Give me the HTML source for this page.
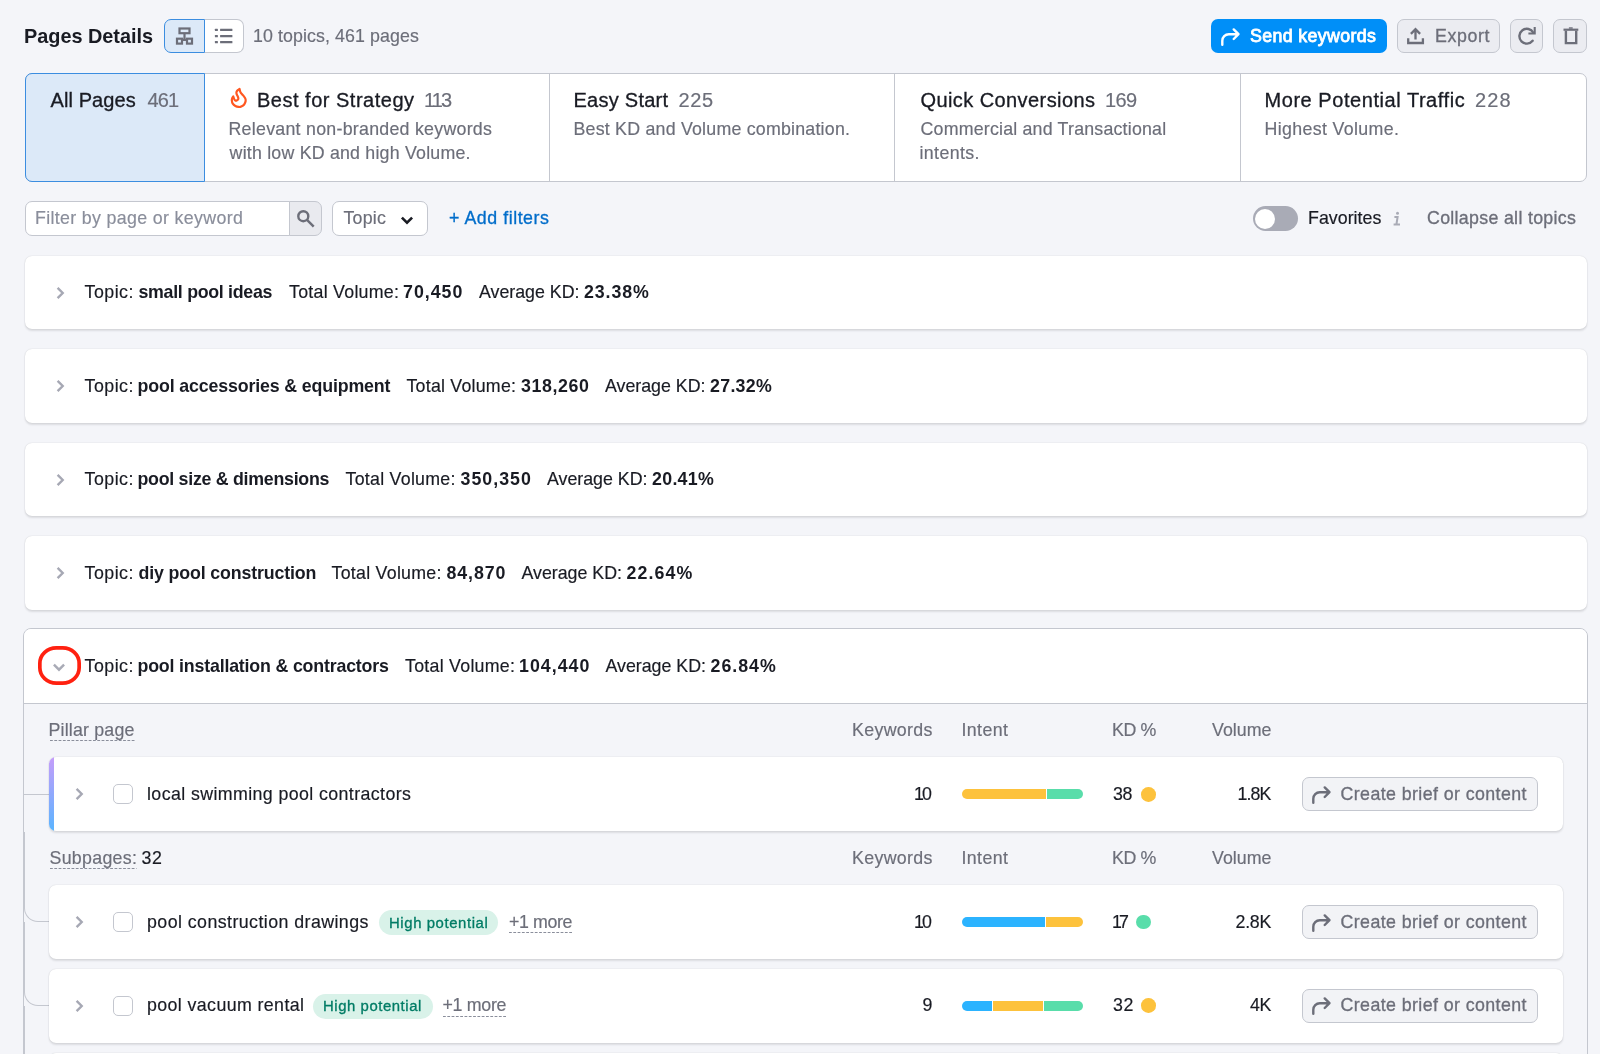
<!DOCTYPE html>
<html lang="en">
<head>
<meta charset="utf-8">
<title>Pages Details</title>
<style>
html,body{margin:0;padding:0}
body{width:1600px;height:1054px;overflow:hidden;position:relative;background:#f4f5f9;font-family:"Liberation Sans",sans-serif;color:#191b23}
.a{position:absolute;box-sizing:border-box}
.t{position:absolute;white-space:pre;line-height:1;font-kerning:normal;-webkit-text-stroke:.18px currentColor}
.b{font-weight:700;-webkit-text-stroke:0}
.m{-webkit-text-stroke:.32px currentColor}
.s{color:#6c6e79}
svg{position:absolute;overflow:visible}
.card{background:#fff;border-radius:7px;box-shadow:0 0 1.2px 0 rgba(25,27,35,.17),0 1.2px 2px 0 rgba(25,27,35,.11)}
.row{background:#fff;border-radius:7px;box-shadow:0 0 1.2px 0 rgba(25,27,35,.17),0 1.2px 2px 0 rgba(25,27,35,.11)}
.btn2{background:#ebecf1;border:1px solid #c4c7cf;border-radius:7px}
.cb{background:#fff;border:1px solid #c4c7cf;border-radius:5px;width:20px;height:20px}
.bar{height:10px;border-radius:5px;overflow:hidden;display:flex;background:#fff}
.bar i{display:block;height:10px}
.bar i+i{margin-left:1px}
.dot{border-radius:50%}
.badge{background:#d9f2e9;border-radius:13px;height:25px}
.dash{border-bottom:1px dashed #8a8e9b;height:0}
.txt{position:absolute;left:0;top:0;width:1600px;height:1054px;will-change:transform}

</style>
</head>
<body>
<!-- header: view toggle -->
<div class="a" style="left:164px;top:19px;width:41px;height:34px;background:#dce9f8;border:1px solid #3b8de0;border-radius:7px 0 0 7px"></div>
<div class="a" style="left:205px;top:19px;width:39px;height:34px;background:#fff;border:1px solid #c4c7cf;border-left:0;border-radius:0 7px 7px 0"></div>
<svg style="left:175px;top:26px" width="19" height="20" viewBox="0 0 19 20" fill="none" stroke="#6c6e79" stroke-width="2.200"><rect x="4.500" y="2.500" width="10" height="4.700"/><rect x="2" y="12.700" width="5" height="4.900"/><rect x="12" y="12.700" width="5" height="4.900"/><path d="M9.500 7.200v5.500M7 13.800h5"/></svg>
<svg style="left:214px;top:26px" width="20" height="20" viewBox="0 0 20 20" fill="#6c6e79"><rect x=".900" y="2.800" width="3" height="2.300" rx=".500"/><rect x="6.100" y="2.800" width="12.300" height="2.300" rx=".300"/><rect x=".900" y="8.900" width="3" height="2.300" rx=".500"/><rect x="6.100" y="8.900" width="12.300" height="2.300" rx=".300"/><rect x=".900" y="15" width="3" height="2.300" rx=".500"/><rect x="6.100" y="15" width="12.300" height="2.300" rx=".300"/></svg>
<!-- header: buttons -->
<div class="a" style="left:1210.75px;top:19px;width:176px;height:34px;background:#008ff8;border-radius:7px"></div>
<svg style="left:1220.2px;top:26.5px" width="22" height="20" viewBox="0 0 22 20" fill="none" stroke="#fff" stroke-width="2.4" stroke-linecap="round" stroke-linejoin="round"><path d="M2.300 17.700v-4a6.500 6.500 0 0 1 6.500-6.500h9.400M13.700 2.400l4.800 4.800-4.800 4.800"/></svg>
<div class="a btn2" style="left:1396.75px;top:19px;width:103.25px;height:34px;"></div>
<svg style="left:1406px;top:26px" width="19" height="20" viewBox="0 0 19 20" fill="none" stroke="#6c6e79" stroke-width="2.300"><path d="M2.200 12.300v4.700h14.700v-4.700M9.500 13.500V3.200M4.900 7.900l4.600-4.700 4.600 4.700"/></svg>
<div class="a btn2" style="left:1510px;top:19px;width:33.25px;height:34px;"></div>
<svg style="left:1517px;top:26px" width="20" height="20" viewBox="0 0 20 20" fill="none" stroke="#6c6e79" stroke-width="2.400"><path d="M16.330 6.730A7.400 7.400 0 1 0 15.630 14.760" stroke-linecap="round"/><path d="M17.700 1v6.500h-6.300" stroke-width="2.100"/></svg>
<div class="a btn2" style="left:1553.25px;top:19px;width:33.75px;height:34px;"></div>
<svg style="left:1560.5px;top:26px" width="20" height="20" viewBox="0 0 20 20" fill="none" stroke="#6c6e79" stroke-width="2.400"><path d="M4.900 4.800v12.300h10.300V4.800"/><path d="M2.500 3.700h14.800" stroke-width="2.200"/><path d="M7.900 2h3.800" stroke-width="1.400"/></svg>
<!-- tabs -->
<div class="a" style="left:24.5px;top:73px;width:1562.5px;height:108.5px;background:#fff;border:1px solid #c4c7cf;border-radius:7px"></div>
<div class="a" style="left:549px;top:74px;width:1px;height:106.5px;background:#c4c7cf"></div>
<div class="a" style="left:894px;top:74px;width:1px;height:106.5px;background:#c4c7cf"></div>
<div class="a" style="left:1240px;top:74px;width:1px;height:106.5px;background:#c4c7cf"></div>
<div class="a" style="left:24.5px;top:73px;width:180px;height:108.5px;background:#dce9f8;border:1px solid #3b8de0;border-radius:7px 0 0 7px"></div>
<svg style="left:229px;top:87px" width="20" height="22" viewBox="0 0 20 22" fill="none" stroke="#ff5720" stroke-width="2.200" stroke-linejoin="round"><path d="M10.54 1.91C10.69 2.47 10.87 4.15 11.47 5.23C12.07 6.32 13.33 7.40 14.12 8.42C14.92 9.44 15.83 10.41 16.25 11.34C16.67 12.27 16.82 12.98 16.65 14.00C16.47 15.02 15.92 16.52 15.19 17.45C14.46 18.38 13.19 19.16 12.26 19.58C11.33 20.00 10.58 20.06 9.61 19.97C8.63 19.89 7.39 19.60 6.42 19.05C5.45 18.49 4.36 17.58 3.76 16.65C3.17 15.73 2.92 14.40 2.84 13.47C2.75 12.54 2.99 11.74 3.23 11.08C3.48 10.41 4.12 9.75 4.30 9.48C4.43 9.88 4.78 11.23 5.09 11.87C5.40 12.52 5.76 13.05 6.16 13.33C6.55 13.62 7.02 13.71 7.48 13.60C7.95 13.49 8.63 13.09 8.94 12.67C9.25 12.25 9.41 11.70 9.34 11.08C9.28 10.46 8.83 9.62 8.55 8.95C8.26 8.29 7.79 7.76 7.62 7.09C7.44 6.43 7.28 5.63 7.48 4.97C7.68 4.30 8.30 3.62 8.81 3.11C9.32 2.60 10.25 2.11 10.54 1.91z"/></svg>
<!-- filter row -->
<div class="a" style="left:24.5px;top:201px;width:265.5px;height:35px;background:#fff;border:1px solid #c4c7cf;border-radius:7px 0 0 7px"></div>
<div class="a" style="left:289px;top:201px;width:33px;height:35px;background:#e9eaef;border:1px solid #c4c7cf;border-radius:0 7px 7px 0"></div>
<svg style="left:296px;top:209px" width="20" height="20" viewBox="0 0 20 20" fill="none" stroke="#6c6e79" stroke-width="2.400"><circle cx="7.300" cy="7.200" r="5"/><path d="M11 10.900l6.700 6.700"/></svg>
<div class="a" style="left:332px;top:201px;width:95.5px;height:35px;background:#fff;border:1px solid #c4c7cf;border-radius:7px"></div>
<svg style="left:400.4px;top:215.8px" width="14" height="9" viewBox="0 0 14 9" fill="none" stroke="#191b23" stroke-width="2.6" stroke-linejoin="miter"><path d="M1.900 1.600l5.100 5.100 5.100-5.100"/></svg>
<div class="a" style="left:1253px;top:206.25px;width:44.5px;height:24.5px;background:#a9abb6;border-radius:13px"></div>
<div class="a" style="left:1255.3px;top:208.8px;width:20px;height:20px;background:#fff;border-radius:50%"></div>
<svg style="left:1392px;top:210px" width="10" height="17" viewBox="0 0 10 17" fill="none" stroke="#a9abb6" stroke-width="2"><circle cx="5.500" cy="3.200" r="1.500" fill="#a9abb6" stroke="none"/><path d="M2.400 6.900h3.200l-1.200 7.600M1.600 14.600h6.400"/></svg>
<!-- topic cards -->
<div class="a card" style="left:25px;top:255.75px;width:1562px;height:73.25px;"></div>
<svg style="left:56px;top:285.75px" width="9" height="14" viewBox="0 0 9 14" fill="none" stroke="#a6a8b4" stroke-width="2.400" stroke-linejoin="miter"><path d="M1.600 1.900l5.100 5.100-5.100 5.100"/></svg>
<div class="a card" style="left:25px;top:349.25px;width:1562px;height:73.25px;"></div>
<svg style="left:56px;top:379.25px" width="9" height="14" viewBox="0 0 9 14" fill="none" stroke="#a6a8b4" stroke-width="2.400" stroke-linejoin="miter"><path d="M1.600 1.900l5.100 5.100-5.100 5.100"/></svg>
<div class="a card" style="left:25px;top:442.75px;width:1562px;height:73.25px;"></div>
<svg style="left:56px;top:472.75px" width="9" height="14" viewBox="0 0 9 14" fill="none" stroke="#a6a8b4" stroke-width="2.400" stroke-linejoin="miter"><path d="M1.600 1.900l5.100 5.100-5.100 5.100"/></svg>
<div class="a card" style="left:25px;top:536.25px;width:1562px;height:73.25px;"></div>
<svg style="left:56px;top:566.25px" width="9" height="14" viewBox="0 0 9 14" fill="none" stroke="#a6a8b4" stroke-width="2.400" stroke-linejoin="miter"><path d="M1.600 1.900l5.100 5.100-5.100 5.100"/></svg>
<!-- expanded card -->
<div class="a" style="left:23px;top:628px;width:1565px;height:460px;background:#f4f5f9;border:1px solid #c4c7cf;border-radius:8px"></div>
<div class="a" style="left:24px;top:629px;width:1563px;height:75px;background:#fff;border-bottom:1px solid #c4c7cf;border-radius:7px 7px 0 0"></div>
<svg style="left:38px;top:646px" width="43" height="39" viewBox="0 0 43 39" fill="none" stroke="#ff2110" stroke-width="3.700"><rect x="1.850" y="1.850" width="39.300" height="35.300" rx="16.500" ry="15.500"/></svg>
<svg style="left:52px;top:663.3px" width="14" height="9" viewBox="0 0 14 9" fill="none" stroke="#a9abb6" stroke-width="2.4" stroke-linejoin="miter"><path d="M1.900 1.600l5.100 5.100 5.100-5.100"/></svg>
<svg style="left:49.5px;top:740.0px" width="85" height="1" viewBox="0 0 85 1"><path d="M0 .500H85" stroke="#8a8e9b" stroke-width="1" stroke-dasharray="2.800 1.500" fill="none"/></svg>
<svg style="left:49.5px;top:868.0px" width="86.5" height="1" viewBox="0 0 86.5 1"><path d="M0 .500H86.5" stroke="#8a8e9b" stroke-width="1" stroke-dasharray="2.800 1.500" fill="none"/></svg>
<!-- connectors -->
<div class="a" style="left:24px;top:793.5px;width:25px;height:1px;background:#c4c7cf"></div>
<div class="a" style="left:24px;top:832px;width:25px;height:90px;border-left:1px solid #c4c7cf;border-bottom:1px solid #c4c7cf;border-bottom-left-radius:14px"></div>
<div class="a" style="left:24px;top:922px;width:25px;height:84px;border-left:1px solid #c4c7cf;border-bottom:1px solid #c4c7cf;border-bottom-left-radius:14px"></div>
<div class="a" style="left:24px;top:1006px;width:25px;height:84px;border-left:1px solid #c4c7cf;border-bottom:1px solid #c4c7cf;border-bottom-left-radius:14px"></div>
<!-- rows -->
<div class="a row" style="left:49px;top:757px;width:1513.500px;height:74px;overflow:hidden"><div style="position:absolute;left:0;top:0;width:5px;height:74px;background:linear-gradient(#c59dfa,#5ab4ff)"></div></div>
<div class="a row" style="left:49px;top:885px;width:1513.5px;height:74px;"></div>
<div class="a row" style="left:49px;top:969px;width:1513.5px;height:74px;"></div>
<div class="a row" style="left:49px;top:1052.5px;width:1513.5px;height:74px;"></div>
<svg style="left:75.3px;top:787.25px" width="9" height="14" viewBox="0 0 9 14" fill="none" stroke="#a6a8b4" stroke-width="2.400" stroke-linejoin="miter"><path d="M1.600 1.900l5.100 5.100-5.100 5.100"/></svg>
<div class="a cb" style="left:113px;top:784.25px;width:20px;height:20px;"></div>
<div class="a bar" style="left:962px;top:789.25px;width:121px"><i style="width:84px;background:#fdc23c"></i><i style="width:36px;background:#59ddaa"></i></div>
<div class="a dot" style="left:1141px;top:786.95px;width:14.6px;height:14.6px;background:#fdc23c"></div>
<div class="a btn2" style="left:1301.5px;top:777.25px;width:236.5px;height:34px;background:#f2f3f6"></div>
<svg style="left:1310.7px;top:784.75px" width="22" height="20" viewBox="0 0 22 20" fill="none" stroke="#6c6e79" stroke-width="2.4" stroke-linecap="round" stroke-linejoin="round"><path d="M2.300 17.700v-4a6.500 6.500 0 0 1 6.500-6.500h9.400M13.700 2.400l4.800 4.800-4.800 4.800"/></svg>
<svg style="left:75.3px;top:915px" width="9" height="14" viewBox="0 0 9 14" fill="none" stroke="#a6a8b4" stroke-width="2.400" stroke-linejoin="miter"><path d="M1.600 1.900l5.100 5.100-5.100 5.100"/></svg>
<div class="a cb" style="left:113px;top:912px;width:20px;height:20px;"></div>
<div class="a bar" style="left:962px;top:917px;width:121px"><i style="width:82.5px;background:#2bb3ff"></i><i style="width:37.5px;background:#fdc23c"></i></div>
<div class="a dot" style="left:1136px;top:914.7px;width:14.6px;height:14.6px;background:#59ddaa"></div>
<div class="a btn2" style="left:1301.5px;top:905px;width:236.5px;height:34px;background:#f2f3f6"></div>
<svg style="left:1310.7px;top:912.5px" width="22" height="20" viewBox="0 0 22 20" fill="none" stroke="#6c6e79" stroke-width="2.4" stroke-linecap="round" stroke-linejoin="round"><path d="M2.300 17.700v-4a6.500 6.500 0 0 1 6.500-6.500h9.400M13.700 2.400l4.800 4.800-4.800 4.800"/></svg>
<svg style="left:75.3px;top:998.75px" width="9" height="14" viewBox="0 0 9 14" fill="none" stroke="#a6a8b4" stroke-width="2.400" stroke-linejoin="miter"><path d="M1.600 1.900l5.100 5.100-5.100 5.100"/></svg>
<div class="a cb" style="left:113px;top:995.75px;width:20px;height:20px;"></div>
<div class="a bar" style="left:962px;top:1000.75px;width:121px"><i style="width:30px;background:#2bb3ff"></i><i style="width:49.5px;background:#fdc23c"></i><i style="width:39.5px;background:#59ddaa"></i></div>
<div class="a dot" style="left:1141px;top:998.45px;width:14.6px;height:14.6px;background:#fdc23c"></div>
<div class="a btn2" style="left:1301.5px;top:988.75px;width:236.5px;height:34px;background:#f2f3f6"></div>
<svg style="left:1310.7px;top:996.25px" width="22" height="20" viewBox="0 0 22 20" fill="none" stroke="#6c6e79" stroke-width="2.4" stroke-linecap="round" stroke-linejoin="round"><path d="M2.300 17.700v-4a6.500 6.500 0 0 1 6.500-6.500h9.400M13.700 2.400l4.800 4.800-4.800 4.800"/></svg>
<div class="a badge" style="left:379px;top:910px;width:119px;height:25px;"></div>
<div class="a badge" style="left:313px;top:993.5px;width:119.5px;height:25px;"></div>
<svg style="left:509px;top:932.0px" width="64" height="1" viewBox="0 0 64 1"><path d="M0 .500H64" stroke="#8a8e9b" stroke-width="1" stroke-dasharray="2.800 1.500" fill="none"/></svg>
<svg style="left:442.5px;top:1015.75px" width="64" height="1" viewBox="0 0 64 1"><path d="M0 .500H64" stroke="#8a8e9b" stroke-width="1" stroke-dasharray="2.800 1.500" fill="none"/></svg>

<div class="txt">
<span class="t b" style="left:24.00px;top:27px;font-size:19.9px;letter-spacing:-0.025px;">Pages Details</span>
<span class="t s" style="left:253.00px;top:28px;font-size:17.8px;letter-spacing:0.094px;">10 topics, 461 pages</span>
<span class="t" style="left:1250.00px;top:28px;font-size:17.8px;letter-spacing:0.360px;-webkit-text-stroke:0.8px currentColor;color:#fff;">Send keywords</span>
<span class="t m s" style="left:1435.00px;top:28px;font-size:17.8px;letter-spacing:0.610px;">Export</span>
<span class="t m" style="left:50.50px;top:90px;font-size:20px;letter-spacing:0.095px;">All Pages</span>
<span class="t s" style="left:147.50px;top:90px;font-size:20px;letter-spacing:-0.873px;">461</span>
<span class="t m" style="left:257.00px;top:90px;font-size:20px;letter-spacing:0.503px;">Best for Strategy</span>
<span class="t s" style="left:424.00px;top:90px;font-size:20px;letter-spacing:-1.881px;">113</span>
<span class="t m" style="left:573.50px;top:90px;font-size:20px;letter-spacing:0.256px;">Easy Start</span>
<span class="t s" style="left:678.50px;top:90px;font-size:20px;letter-spacing:0.627px;">225</span>
<span class="t m" style="left:920.50px;top:90px;font-size:20px;letter-spacing:0.416px;">Quick Conversions</span>
<span class="t s" style="left:1105.00px;top:90px;font-size:20px;letter-spacing:-0.623px;">169</span>
<span class="t m" style="left:1264.50px;top:90px;font-size:20px;letter-spacing:0.549px;">More Potential Traffic</span>
<span class="t s" style="left:1475.00px;top:90px;font-size:20px;letter-spacing:1.127px;">228</span>
<span class="t s" style="left:228.50px;top:121px;font-size:17.8px;letter-spacing:0.264px;">Relevant non-branded keywords</span>
<span class="t s" style="left:229.60px;top:145px;font-size:17.8px;letter-spacing:0.208px;">with low KD and high Volume.</span>
<span class="t s" style="left:573.50px;top:121px;font-size:17.8px;letter-spacing:0.220px;">Best KD and Volume combination.</span>
<span class="t s" style="left:920.50px;top:121px;font-size:17.8px;letter-spacing:0.203px;">Commercial and Transactional</span>
<span class="t s" style="left:919.50px;top:145px;font-size:17.8px;letter-spacing:0.373px;">intents.</span>
<span class="t s" style="left:1264.50px;top:121px;font-size:17.8px;letter-spacing:0.354px;">Highest Volume.</span>
<span class="t" style="left:35.00px;top:210px;font-size:17.8px;letter-spacing:0.344px;color:#8a8e9b;">Filter by page or keyword</span>
<span class="t s" style="left:343.50px;top:210px;font-size:17.8px;letter-spacing:0.220px;">Topic</span>
<span class="t m" style="left:449.00px;top:210px;font-size:17.8px;letter-spacing:0.542px;color:#006dca;">+ Add filters</span>
<span class="t" style="left:1308.00px;top:210px;font-size:17.8px;letter-spacing:0.034px;">Favorites</span>
<span class="t m s" style="left:1427.00px;top:210px;font-size:17.8px;letter-spacing:0.310px;">Collapse all topics</span>
<span class="t" style="left:84.50px;top:284px;font-size:17.8px;letter-spacing:0.498px;">Topic:</span>
<span class="t b" style="left:138.50px;top:284px;font-size:17.8px;letter-spacing:-0.297px;">small pool ideas</span>
<span class="t" style="left:289.00px;top:284px;font-size:17.8px;letter-spacing:0.266px;">Total Volume:</span>
<span class="t b" style="left:403.00px;top:284px;font-size:17.8px;letter-spacing:1.001px;">70,450</span>
<span class="t" style="left:479.00px;top:284px;font-size:17.8px;letter-spacing:-0.005px;">Average KD:</span>
<span class="t b" style="left:584.00px;top:284px;font-size:17.8px;letter-spacing:0.901px;">23.38%</span>
<span class="t" style="left:84.50px;top:378px;font-size:17.8px;letter-spacing:0.498px;">Topic:</span>
<span class="t b" style="left:137.50px;top:378px;font-size:17.8px;letter-spacing:-0.148px;">pool accessories &amp; equipment</span>
<span class="t" style="left:406.50px;top:378px;font-size:17.8px;letter-spacing:0.224px;">Total Volume:</span>
<span class="t b" style="left:521.00px;top:378px;font-size:17.8px;letter-spacing:0.602px;">318,260</span>
<span class="t" style="left:605.00px;top:378px;font-size:17.8px;letter-spacing:-0.005px;">Average KD:</span>
<span class="t b" style="left:710.00px;top:378px;font-size:17.8px;letter-spacing:0.301px;">27.32%</span>
<span class="t" style="left:84.50px;top:471px;font-size:17.8px;letter-spacing:0.498px;">Topic:</span>
<span class="t b" style="left:137.50px;top:471px;font-size:17.8px;letter-spacing:-0.272px;">pool size &amp; dimensions</span>
<span class="t" style="left:345.50px;top:471px;font-size:17.8px;letter-spacing:0.266px;">Total Volume:</span>
<span class="t b" style="left:460.50px;top:471px;font-size:17.8px;letter-spacing:1.019px;">350,350</span>
<span class="t" style="left:547.00px;top:471px;font-size:17.8px;letter-spacing:-0.005px;">Average KD:</span>
<span class="t b" style="left:652.00px;top:471px;font-size:17.8px;letter-spacing:0.301px;">20.41%</span>
<span class="t" style="left:84.50px;top:565px;font-size:17.8px;letter-spacing:0.498px;">Topic:</span>
<span class="t b" style="left:138.50px;top:565px;font-size:17.8px;letter-spacing:-0.146px;">diy pool construction</span>
<span class="t" style="left:331.50px;top:565px;font-size:17.8px;letter-spacing:0.266px;">Total Volume:</span>
<span class="t b" style="left:446.50px;top:565px;font-size:17.8px;letter-spacing:0.901px;">84,870</span>
<span class="t" style="left:521.50px;top:565px;font-size:17.8px;letter-spacing:-0.005px;">Average KD:</span>
<span class="t b" style="left:626.50px;top:565px;font-size:17.8px;letter-spacing:1.101px;">22.64%</span>
<span class="t" style="left:84.50px;top:658px;font-size:17.8px;letter-spacing:0.498px;">Topic:</span>
<span class="t b" style="left:137.50px;top:658px;font-size:17.8px;letter-spacing:-0.183px;">pool installation &amp; contractors</span>
<span class="t" style="left:405.00px;top:658px;font-size:17.8px;letter-spacing:0.266px;">Total Volume:</span>
<span class="t b" style="left:519.00px;top:658px;font-size:17.8px;letter-spacing:1.019px;">104,440</span>
<span class="t" style="left:605.50px;top:658px;font-size:17.8px;letter-spacing:-0.005px;">Average KD:</span>
<span class="t b" style="left:710.50px;top:658px;font-size:17.8px;letter-spacing:1.001px;">26.84%</span>
<span class="t s" style="left:852.00px;top:722px;font-size:17.8px;letter-spacing:0.331px;">Keywords</span>
<span class="t s" style="left:961.50px;top:722px;font-size:17.8px;letter-spacing:0.390px;">Intent</span>
<span class="t s" style="left:1112.00px;top:722px;font-size:17.8px;letter-spacing:-0.380px;">KD %</span>
<span class="t s" style="left:1212.00px;top:722px;font-size:17.8px;letter-spacing:0.016px;">Volume</span>
<span class="t s" style="left:852.00px;top:850px;font-size:17.8px;letter-spacing:0.331px;">Keywords</span>
<span class="t s" style="left:961.50px;top:850px;font-size:17.8px;letter-spacing:0.390px;">Intent</span>
<span class="t s" style="left:1112.00px;top:850px;font-size:17.8px;letter-spacing:-0.380px;">KD %</span>
<span class="t s" style="left:1212.00px;top:850px;font-size:17.8px;letter-spacing:0.016px;">Volume</span>
<span class="t s" style="left:48.50px;top:722px;font-size:17.8px;letter-spacing:0.187px;">Pillar page</span>
<span class="t s" style="left:49.50px;top:850px;font-size:17.8px;letter-spacing:0.302px;">Subpages:</span>
<span class="t" style="left:141.50px;top:850px;font-size:17.8px;letter-spacing:0.611px;">32</span>
<span class="t" style="left:147.00px;top:786px;font-size:17.8px;letter-spacing:0.397px;">local swimming pool contractors</span>
<span class="t" style="left:147.00px;top:914px;font-size:17.8px;letter-spacing:0.435px;">pool construction drawings</span>
<span class="t" style="left:147.00px;top:997px;font-size:17.8px;letter-spacing:0.395px;">pool vacuum rental</span>
<span class="t m" style="left:389.00px;top:916px;font-size:14.9px;letter-spacing:0.596px;color:#007c65;">High potential</span>
<span class="t m" style="left:323.00px;top:999px;font-size:14.9px;letter-spacing:0.558px;color:#007c65;">High potential</span>
<span class="t s" style="left:509.00px;top:914px;font-size:17.8px;letter-spacing:-0.389px;">+1 more</span>
<span class="t s" style="left:442.50px;top:997px;font-size:17.8px;letter-spacing:-0.306px;">+1 more</span>
<span class="t" style="left:914.00px;top:786px;font-size:17.8px;letter-spacing:-1.889px;">10</span>
<span class="t" style="left:914.00px;top:914px;font-size:17.8px;letter-spacing:-1.889px;">10</span>
<span class="t" style="left:922.50px;top:997px;font-size:17.8px;letter-spacing:0.000px;">9</span>
<span class="t" style="left:1113.00px;top:786px;font-size:17.8px;letter-spacing:-0.389px;">38</span>
<span class="t" style="left:1112.00px;top:914px;font-size:17.8px;letter-spacing:-2.889px;">17</span>
<span class="t" style="left:1113.00px;top:997px;font-size:17.8px;letter-spacing:0.611px;">32</span>
<span class="t" style="left:1237.50px;top:786px;font-size:17.8px;letter-spacing:-0.906px;">1.8K</span>
<span class="t" style="left:1235.50px;top:914px;font-size:17.8px;letter-spacing:-0.239px;">2.8K</span>
<span class="t" style="left:1250.00px;top:997px;font-size:17.8px;letter-spacing:-0.389px;">4K</span>
<span class="t m s" style="left:1340.50px;top:786px;font-size:17.8px;letter-spacing:0.410px;">Create brief or content</span>
<span class="t m s" style="left:1340.50px;top:914px;font-size:17.8px;letter-spacing:0.410px;">Create brief or content</span>
<span class="t m s" style="left:1340.50px;top:997px;font-size:17.8px;letter-spacing:0.410px;">Create brief or content</span>
</div>
</body>
</html>
